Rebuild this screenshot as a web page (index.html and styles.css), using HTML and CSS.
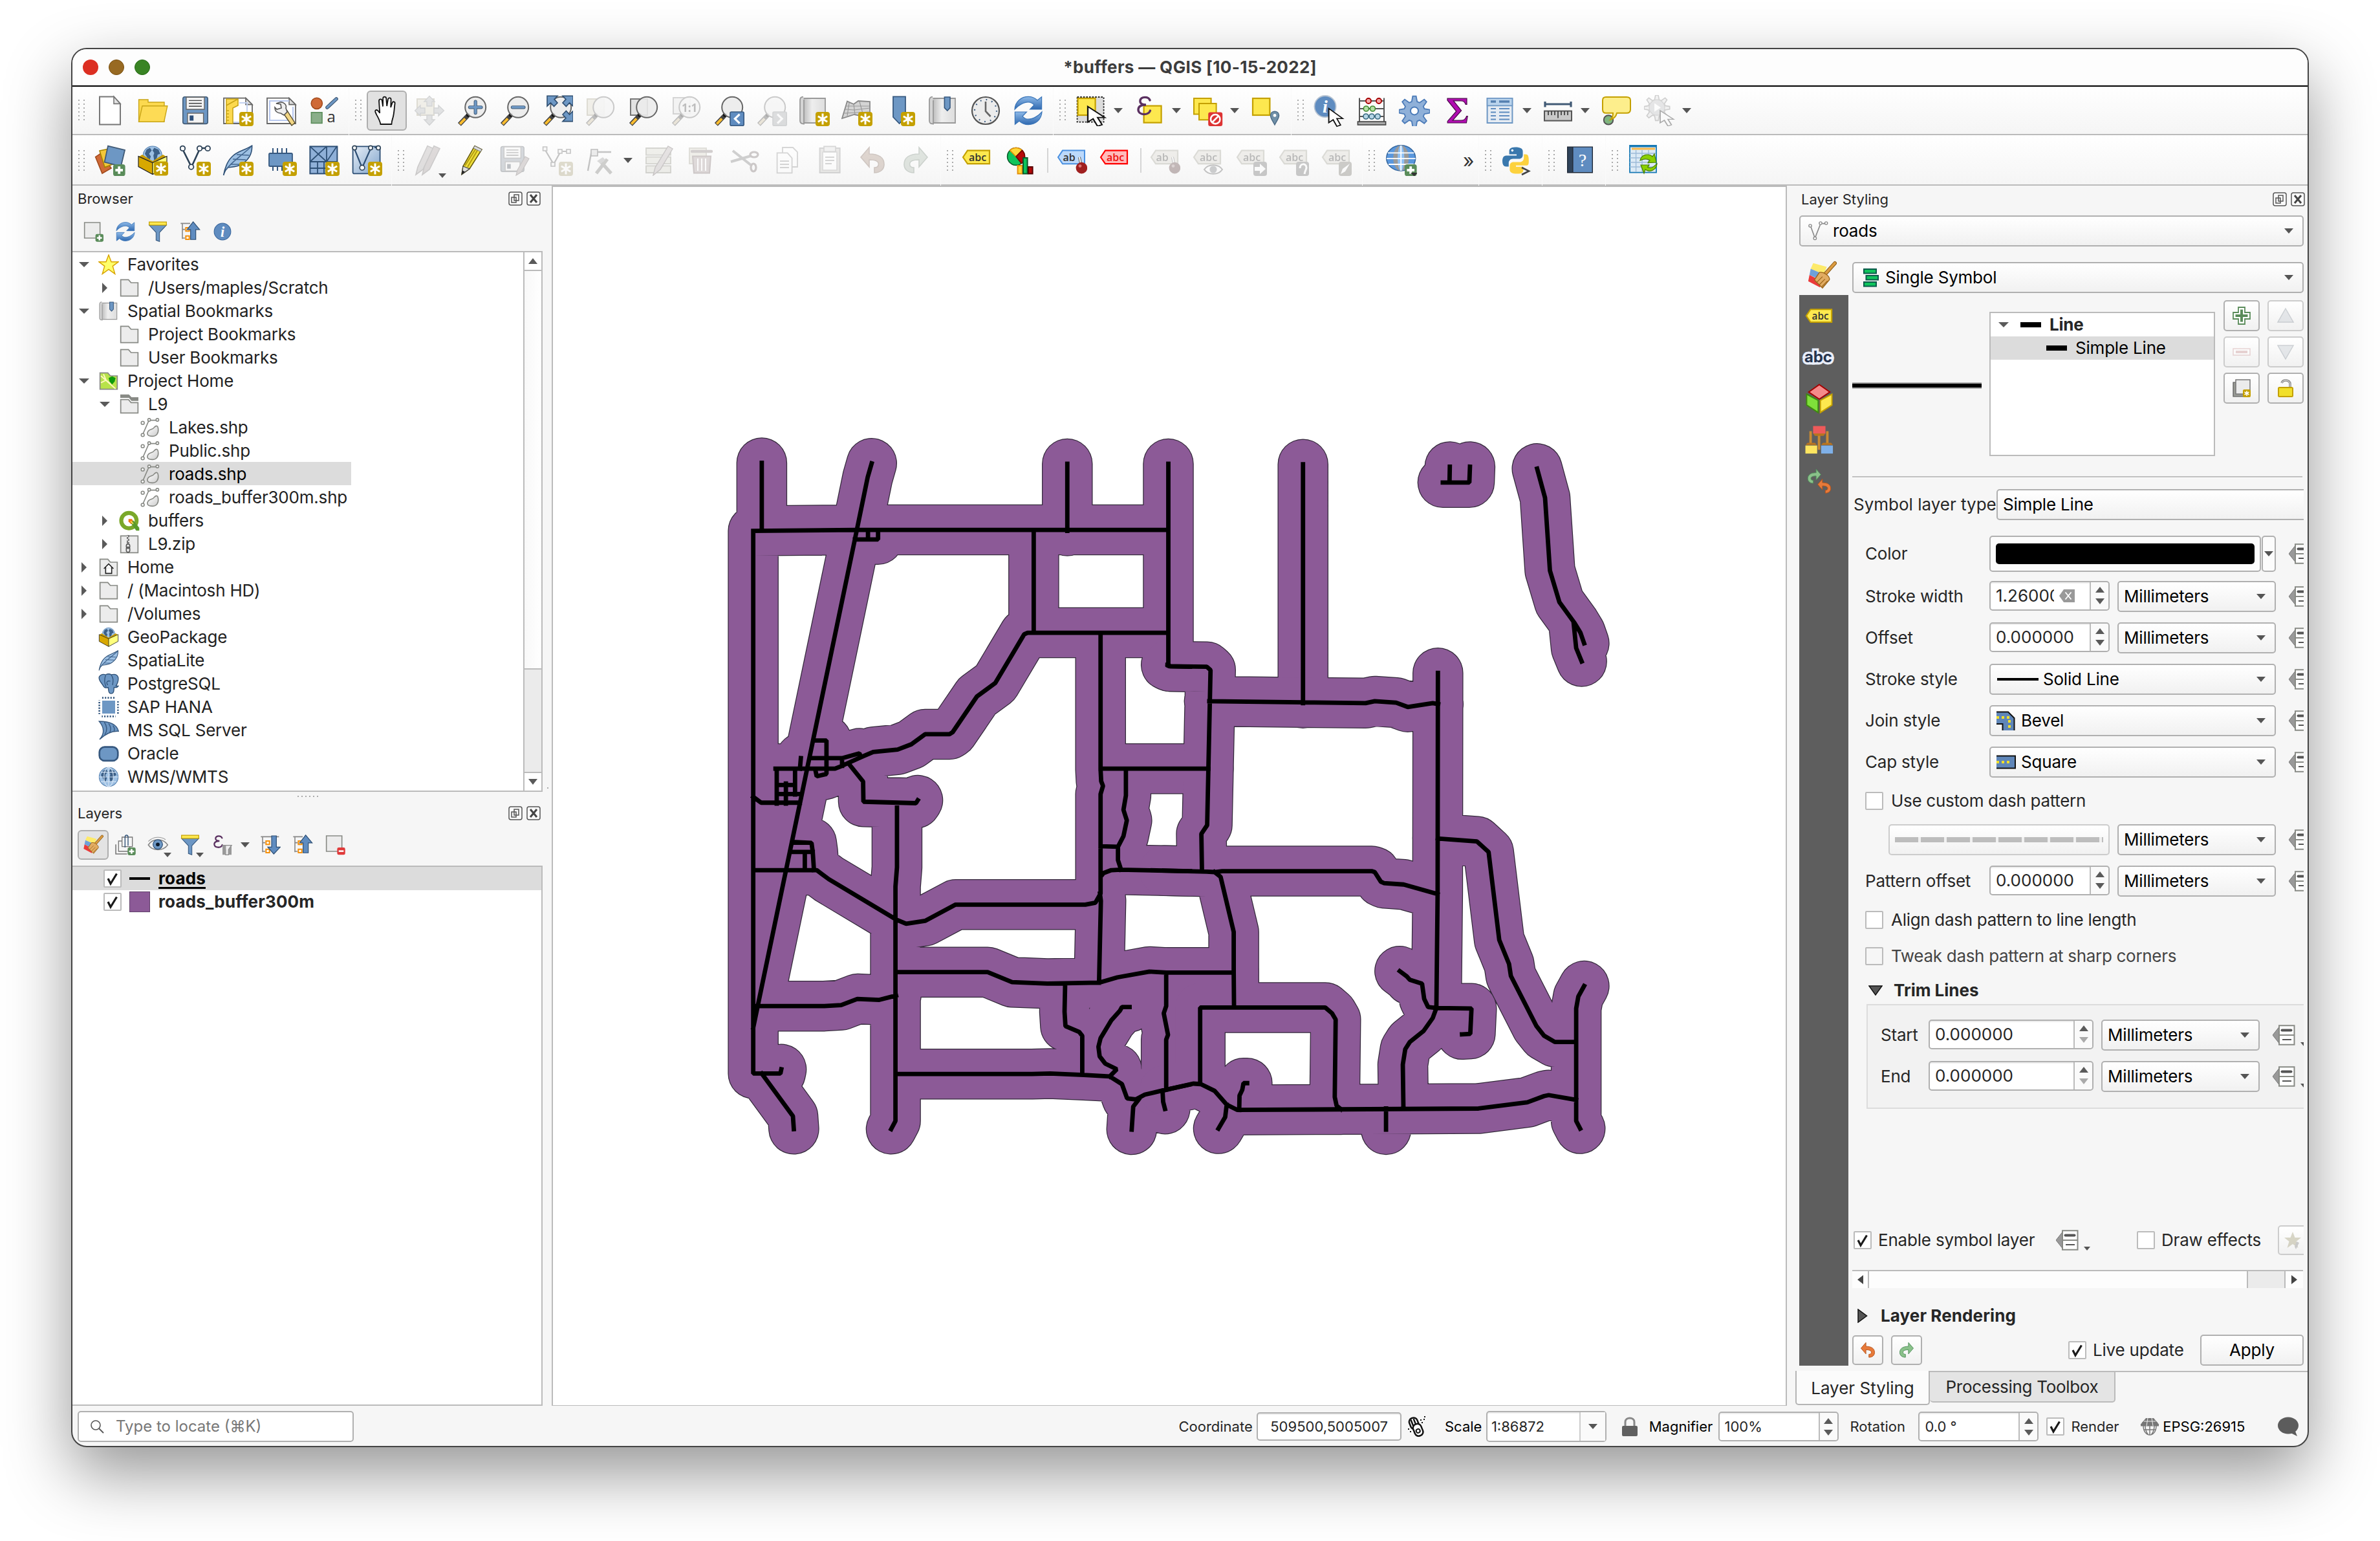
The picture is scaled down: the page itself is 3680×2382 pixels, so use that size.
FILE: index.html
```html
<!DOCTYPE html>
<html lang="en">
<head>
<meta charset="utf-8">
<title>*buffers — QGIS [10-15-2022]</title>
<link rel="stylesheet" href="styles.css">
</head>
<body>
<svg class="sprite" width="0" height="0" aria-hidden="true">
  <defs>
    <linearGradient id="g-blue" x1="0" y1="0" x2="1" y2="1"><stop offset="0" stop-color="#e6eef7"/><stop offset="1" stop-color="#7fa3cb"/></linearGradient>
    <linearGradient id="g-arrow" x1="0" y1="0" x2="0" y2="1"><stop offset="0" stop-color="#8db9e8"/><stop offset="1" stop-color="#2f69b0"/></linearGradient>
    <linearGradient id="g-grey" x1="0" y1="0" x2="1" y2="0"><stop offset="0" stop-color="#bbb"/><stop offset=".4" stop-color="#eee"/><stop offset="1" stop-color="#ddd"/></linearGradient>
    <linearGradient id="g-shape" x1="0" y1="0" x2="1" y2="1"><stop offset="0" stop-color="#fff"/><stop offset="1" stop-color="#ccc"/></linearGradient>
    <g id="b-new"><rect x="13" y="13" width="11" height="11" rx="2" fill="#c4a000"/><path d="M18.500 14.300v8.400M14.900 16.400l7.200 4.200M22.100 16.400l-7.200 4.200" stroke="#fff" stroke-width="1.500"/></g>
    <g id="b-plus"><rect x="14.500" y="15" width="9.300" height="9" rx="1.800" fill="#5a8c5a"/><path d="M19.100 16.600v5.800M16.200 19.500h5.800" stroke="#fff" stroke-width="1.900"/></g>
    <g id="lens"><path d="M9.300 15.200L2.200 22.700" stroke="#444" stroke-width="3.400"/><path d="M6.600 18.200L2.600 22.300" stroke="#fcbd2f" stroke-width="2"/><circle cx="9" cy="15.400" r="1.500" fill="#111"/><circle cx="14.600" cy="9.400" r="8" fill="#ebebeb" fill-opacity=".9" stroke="#666" stroke-width="1"/></g>
    <g id="cursor"><path d="M0 0v11.500l2.800-2.400 2.400 5.400 2.400-1.100-2.400-5.300h3.800z" fill="#fff" stroke="#111" stroke-width=".8"/></g>
    <g id="world"><circle cx="12" cy="12" r="11" fill="#9dc0e3" stroke="#5580b0" stroke-width=".8"/><path d="M5 5l4-2 2 3-3 4 2 3-2 6-3-6-2-3zM14 3l5 2 2 5-3 1-1 4-3 3-1-6 1-3-2-3z" fill="#3c6088"/></g>
    <g id="cube"><path d="M1 10l11 5v9L1 18z" fill="#d8a800"/><path d="M23 10l-11 5v9l11-6z" fill="#ffff7d"/><path d="M1 10l11 5 11-5v8l-11 6L1 18zM12 15v9" fill="none" stroke="#222" stroke-width=".6"/></g>
  </defs>

  <symbol id="i-new" viewBox="0 0 24 24"><path d="M4 1.200h11l5 5.500v16H4z" fill="#fff" stroke="#777"/><path d="M15 1.200v5.500h5z" fill="#e4e4e4" stroke="#777" stroke-width=".8"/></symbol>
  <symbol id="i-open" viewBox="0 0 24 24"><path d="M1.300 3.500h7.200v2H21v15H1.300z" fill="#fcd94f" stroke="#c8a416" stroke-width=".7"/><path d="M4 8.400h19.400l-2.600 12.200H1.300z" fill="#fddb55" stroke="#c8a416" stroke-width=".7"/></symbol>
  <symbol id="i-save" viewBox="0 0 24 24"><rect x="2.400" y="1.400" width="19.200" height="20.800" rx="1.500" fill="#6d97c4" stroke="#415a75" stroke-width=".8"/><path d="M5 1.600h14V11H5zM6 14h12.300v7.600H6z" fill="#f3f3f3" stroke="#666" stroke-width=".7"/><path d="M7 4.200h10M7 6.400h10M7 8.600h10" stroke="#444" stroke-width=".7"/><path d="M7.600 15.800h3v4h-3z" fill="#2d4f7a"/></symbol>
  <symbol id="i-layout" viewBox="0 0 24 24"><path d="M1 2.300h17l5 5V22H1z" fill="#fff" stroke="#666" stroke-width=".9"/><path d="M18 2.300v5h5z" fill="#ddd" stroke="#666" stroke-width=".8"/><path d="M13 6h6v15H7" fill="none" stroke="#c3d2f2"/><path d="M3 3h9v5l-4 2v12H3z" fill="#fcd94f" stroke="#c8a416" stroke-width=".8"/><path d="M3 8l9-5M3 12h2M3 14.500h2M3 17h2M3 19.500h2" stroke="#c8a416" stroke-width=".8"/><use href="#b-new"/></symbol>
  <symbol id="i-layouts" viewBox="0 0 24 24"><path d="M1 2.300h17l5 5V22H1z" fill="#fff" stroke="#666" stroke-width=".9"/><path d="M18 2.300v5h5z" fill="#ddd" stroke="#666" stroke-width=".8"/><path d="M3 4.500h15M3 4v15.500h18V9" fill="none" stroke="#b9c9ef" stroke-width="1.100"/><path d="M13.500 14l3-2 6 9.500-2.500 2z" fill="#f2d684" stroke="#554a2a" stroke-width=".7"/><path d="M8 6.500l3.500.5.5 3-3.500 1-1.500-1.500c0 3 2 4.500 4.500 4.500l2.500 1.500 2.500-2.500-1-3c1-2.500-2-5-4.500-4.500z" fill="#eee" stroke="#555" stroke-width=".8"/></symbol>
  <symbol id="i-style" viewBox="0 0 24 24"><circle cx="6.400" cy="6.400" r="4.300" fill="#cf6a37" stroke="#a34b1d" stroke-width=".8"/><path d="M14.500 9.500l7-6.500" stroke="#415a75" stroke-width="2.800" stroke-linecap="round"/><path d="M14.500 9.500l7-6.500" stroke="#6d97c4" stroke-width="1.600" stroke-linecap="round"/><rect x="2.200" y="13.400" width="8.300" height="8.300" fill="#8aae8a" stroke="#5a8c5a" stroke-width=".8"/></symbol>
  <symbol id="i-hand" viewBox="0 0 24 24"><path d="M7.200 22.500c-.4-2.600-1.600-4.600-3-7.200-.6-1.400-1.700-2.700-.9-3.500 1-.9 2.300.3 3.300 2.100L6 4.500c0-1.600 2.100-1.800 2.400-.2l.6 4.500.1-6.300c0-1.600 2.300-1.600 2.500 0l.5 6 .9-5.400c.3-1.400 2.300-1.200 2.300.3l-.2 6.100 1.200-3.600c.5-1.300 2.200-.8 2 .6-.6 4.300-.5 7.500-1.600 11.200-.6 1.800-.9 3-1 4.800z" fill="#fff" stroke="#111" stroke-width=".9"/></symbol>
  <symbol id="i-pan" viewBox="0 0 24 24"><rect x="2.500" y="3" width="13" height="12.500" fill="#e8d889" stroke="#b89f3e"/><path d="M12 .8l4 4.200h-2v3.500h-4V5H8zM12 23.200L8 19h2v-3.500h4V19h2zM.8 12L5 8v2h3.500v4H5v2zM23.200 12L19 16v-2h-3.500v-4H19V8z" fill="#a9b4c0" stroke="#7d8a98" stroke-width=".7"/></symbol>
  <symbol id="i-zin" viewBox="0 0 24 24"><use href="#lens"/><path d="M14.600 5v8.800M10.200 9.400H19" stroke="#415a75" stroke-width="2.600" stroke-linecap="round"/><path d="M14.600 5v8.800M10.200 9.400H19" stroke="#6d97c4" stroke-width="1.700" stroke-linecap="round"/></symbol>
  <symbol id="i-zout" viewBox="0 0 24 24"><use href="#lens"/><path d="M10.200 9.400H19" stroke="#415a75" stroke-width="2.600" stroke-linecap="round"/><path d="M10.200 9.400H19" stroke="#6d97c4" stroke-width="1.700" stroke-linecap="round"/></symbol>
  <symbol id="i-zfull" viewBox="0 0 24 24"><use href="#lens"/><path d="M4 .6h8L9.500 3.200 12 6 9.300 8.800 6.700 6 4 8.600zM24 .6h-8l2.500 2.600L16 6l2.700 2.800L21.300 6 24 8.600zM24 20.300h-8l2.500-2.600L16 15l2.700-2.800 2.600 2.800 2.700-2.700z" fill="#6d97c4" stroke="#2f4e70" stroke-width=".8"/></symbol>
  <symbol id="i-zsel" viewBox="0 0 24 24"><path d="M2 3h13v12.500H2z" fill="#e8d889" stroke="#b89f3e"/><use href="#lens"/></symbol>
  <symbol id="i-zlay" viewBox="0 0 24 24"><path d="M2 3h13v12.500H2z" fill="#e3e3e3" stroke="#777"/><use href="#lens"/></symbol>
  <symbol id="i-z11" viewBox="0 0 24 24"><path d="M2 2h13v12.500H2z" fill="#e3e3e3" stroke="#888"/><use href="#lens"/></symbol>
  <symbol id="i-zlast" viewBox="0 0 24 24"><use href="#lens"/><rect x="13" y="13" width="10.600" height="10.600" rx="1" fill="#5f8cc0" stroke="#36587f" stroke-width=".8"/><path d="M20.300 14.800l-3.600 3.500 3.600 3.500" fill="none" stroke="#fff" stroke-width="1.600"/></symbol>
  <symbol id="i-znext" viewBox="0 0 24 24"><use href="#lens"/><rect x="13" y="13" width="10.600" height="10.600" rx="1" fill="#9aa6b3" stroke="#7d8a98" stroke-width=".8"/><path d="M16.500 14.800l3.600 3.500-3.600 3.500" fill="none" stroke="#fff" stroke-width="1.600"/></symbol>
  <symbol id="i-newmap" viewBox="0 0 24 24"><path d="M3.500 2.500h17v19h-17z" fill="url(#g-grey)" stroke="#999" stroke-width=".9"/><path d="M3.500 1.300c-2.500 0-2.500 2-2.500 3v15.500c0 2 1 2.500 3 2.500V3.500" fill="#d5d5d5" stroke="#999" stroke-width=".9"/><use href="#b-new"/></symbol>
  <symbol id="i-3d" viewBox="0 0 24 24"><path d="M4.500 4.800L9.500 7 13 4.500l9 .5v12.500l-5-1-7-1.500-9.500 3z" fill="#d4d4d4" stroke="#888" stroke-width=".9"/><path d="M3 11l7 .5 12-1.500M9.500 7l1 8M14 5l3 11M6 6l-1.500 10M3.500 8.500l18 0M2 14l20-1" stroke="#999" stroke-width=".6" fill="none"/><use href="#b-new"/></symbol>
  <symbol id="i-bmnew" viewBox="0 0 24 24"><path d="M7 1.200h9.500V17l-4.700 5L7 17z" fill="#6d97c4" stroke="#36587f" stroke-width=".9"/><use href="#b-new"/></symbol>
  <symbol id="i-bm" viewBox="0 0 24 24"><path d="M4 2.500h17.500v19H4z" fill="url(#g-grey)" stroke="#999" stroke-width=".9"/><path d="M4 1.300c-2 0-2.500 1-2.500 3v15.500c0 2 1 2.300 3 2.500V4" fill="#d5d5d5" stroke="#999" stroke-width=".9"/><path d="M13.200 1.500h4.300v8.300l-2.100 2.200-2.200-2.200z" fill="#6d97c4" stroke="#36587f" stroke-width=".8"/></symbol>
  <symbol id="i-clock" viewBox="0 0 24 24"><circle cx="12" cy="12" r="10.500" fill="#ececec" stroke="#555" stroke-width="1.100"/><circle cx="12" cy="12" r="8.500" fill="none" stroke="#36587f" stroke-width="1.100" stroke-dasharray=".9 3.550"/><path d="M12 5v7.500l3.800 4" stroke="#666" stroke-width="1.300" fill="none"/></symbol>
  <symbol id="i-refresh" viewBox="0 0 24 24"><path d="M1.500 11C1.800 5 6.500 1.200 12 1.200c3 0 5.300 1.200 7 2.800l3.300-2.600V11h-9l3.200-3.400C15 6 13.800 5.400 12 5.400 8.500 5.400 4 8 1.500 11z" fill="url(#g-arrow)" stroke="#3a75b8" stroke-width=".6"/><path d="M22.500 13c-.3 6-5 9.800-10.500 9.800-3 0-5.300-1.200-7-2.800l-3.300 2.600V13h9l-3.200 3.400c1.500 1.600 2.700 2.200 4.500 2.200 3.500 0 8-2.600 10.500-5.600z" fill="url(#g-arrow)" stroke="#3a75b8" stroke-width=".6"/></symbol>
  <symbol id="i-select" viewBox="0 0 24 24"><rect x="1.300" y="1.500" width="20.500" height="19.300" fill="#dcdcdc" stroke="#222" stroke-width=".9" stroke-dasharray="1.300 1"/><rect x="1.800" y="2.500" width="13.500" height="13" fill="#fde84f" stroke="#c4a000" stroke-width="1.100"/><g transform="translate(9.500 8.800) scale(1.450 1.050)"><use href="#cursor"/></g></symbol>
  <symbol id="i-eps" viewBox="0 0 24 24"><rect x="7.800" y="8.300" width="13.500" height="13" fill="#fde84f" stroke="#c4a000" stroke-width="1.100"/><path d="M12.500 4c-1-3-7-3.200-7.500.3-.3 2.400 2 3.200 4.500 3.200-3 0-6 .8-6 3.800.2 4.500 8 4.600 9.200.7" fill="none" stroke="#5a3060" stroke-width="1.700" stroke-linecap="round"/></symbol>
  <symbol id="i-desel" viewBox="0 0 24 24"><path d="M1.500 2.500h13.300v12.300H1.500z" fill="#fde84f" stroke="#c4a000"/><path d="M5.500 6.500h13.300v12.600H5.500z" fill="#fde84f" stroke="#c4a000"/><rect x="12.600" y="13.200" width="11" height="10.800" rx="1.500" fill="#d33"/><circle cx="18.100" cy="18.600" r="3.600" fill="#d33" stroke="#fff" stroke-width="1.300"/><path d="M15.700 21l4.800-4.800" stroke="#fff" stroke-width="1.300"/></symbol>
  <symbol id="i-selloc" viewBox="0 0 24 24"><rect x="2" y="2.500" width="13.200" height="13" fill="#fde84f" stroke="#c4a000" stroke-width="1.100"/><path d="M19 23c-1.700-3.500-3.300-5-3.300-7.400 0-4 6.600-4 6.600 0C22.300 18 20.700 19.500 19 23z" fill="#7090a8" stroke="#4a6a85" stroke-width=".7"/><circle cx="19" cy="15.700" r="1.200" fill="#fff"/></symbol>
  <symbol id="i-disc" viewBox="0 0 24 24"><circle cx="9" cy="8.800" r="8.300" fill="#5f8cc0" stroke="#b8c4d2" stroke-width=".9"/></symbol>
  <symbol id="i-abacus" viewBox="0 0 24 24"><path d="M2.500 2.200V21M21.500 2.200V21M2.500 4.500h19M2.500 10.500h19M2.500 16.500h19" stroke="#555" stroke-width="1" fill="none"/><rect x="1.200" y="20.500" width="21.600" height="2.500" fill="#aaa" stroke="#444" stroke-width=".8"/><g fill="#f4a6a6" stroke="#a40000" stroke-width=".9"><circle cx="9.500" cy="4.500" r="2"/><circle cx="17.500" cy="4.500" r="2"/></g><g fill="#b5e0a5" stroke="#3f8a2f" stroke-width=".8"><circle cx="7.700" cy="10.500" r="2"/><circle cx="12.700" cy="10.500" r="2"/></g><g fill="#b5d5e5" stroke="#36687f" stroke-width=".8"><circle cx="7.500" cy="16.500" r="2"/><circle cx="12" cy="16.500" r="2"/><circle cx="16.600" cy="16.500" r="2"/></g></symbol>
  <symbol id="i-gear" viewBox="0 0 24 24"><g fill="#8fb0d8" stroke="#4a7ab8" stroke-width=".9"><path id="gear-p" d="M10.700 1.500h2.600l.8 4.300 1.900.8 3.600-2.600 1.800 1.900-2.500 3.600.8 1.800 4.200.7v2.500l-4.200.8-.8 1.900 2.500 3.500-1.800 1.900-3.600-2.500-1.900.8-.8 4.200h-2.600l-.8-4.200-1.900-.8-3.500 2.500-1.900-1.900L5 17.200l-.8-1.900-4.100-.8v-2.500l4.100-.7.800-1.800-2.400-3.600L4.500 4 8 6.600l1.900-.8z" transform="translate(0 -.7)"/></g><circle cx="12" cy="12.200" r="3" fill="#fff" stroke="#4a7ab8"/></symbol>
  <symbol id="i-sigma" viewBox="0 0 24 24"><path d="M4.500 2.600h15v4.600h-.9C18 5 17 4.400 15 4.400H9.200L15.300 12l-6.700 7.600H15c2.500 0 3.600-1 4.300-3.300h.8l-.9 5.200H4.600v-1.300L11.400 12.500 4.500 4z" fill="#b10db1" stroke="#4a0a4a" stroke-width=".6"/></symbol>
  <symbol id="i-table" viewBox="0 0 24 24"><rect x="2.300" y="2.500" width="19.400" height="19" fill="#e6ecf3" stroke="#6d97c4" stroke-width="1"/><path d="M2.300 2.500h19.400v5.700H2.300z" fill="#b9d3ec" stroke="#6d97c4" stroke-width=".8"/><path d="M5 5h4M11.500 5h8" stroke="#5580b0" stroke-width="1.700"/><path d="M5 10.500h4M11.500 10.500h8M5 13.200h4M11.500 13.200h8M5 16h4M11.500 16h8M5 18.800h4M11.500 18.800h8" stroke="#5f8cc0" stroke-width="1"/></symbol>
  <symbol id="i-measure" viewBox="0 0 24 24"><path d="M2 7h20M2 5v4.200M22 5v4.200" stroke="#415a75" stroke-width="1.600" fill="none"/><rect x="1.500" y="12.300" width="21" height="7.500" fill="#c9c9c9" stroke="#555" stroke-width="1"/><path d="M4.500 12.500v3M7 12.500v3M9.500 12.500v3M12 12.500v5.200M14.500 12.500v3M17 12.500v3M19.500 12.500v3" stroke="#333" stroke-width=".8"/></symbol>
  <symbol id="i-tip" viewBox="0 0 24 24"><circle cx="6" cy="19.200" r="3.600" fill="#7fb57f" stroke="#555" stroke-width="1"/><path d="M4 1.500h16c2 0 3 .8 3 2.600v7c0 1.800-1 2.800-3 2.800h-7.500c-.6 2.500-2 4.200-4.800 5 1.500-1.600 1.900-3 1.800-5H4c-1.700 0-2.500-1-2.500-2.800v-7c0-1.800.8-2.600 2.500-2.600z" fill="#fdee8c" stroke="#c4a000" stroke-width="1"/></symbol>
  <symbol id="i-action" viewBox="0 0 24 24"><g transform="translate(0 -.6) scale(.83)" fill="#ddd" stroke="#777" stroke-width="1"><use href="#gear-p"/></g><circle cx="10" cy="9.600" r="6" fill="#b5bcc5" stroke="#888" stroke-width=".6"/><path d="M8 6.300l5 3.300-5 3.300z" fill="#fff"/><g transform="translate(12.500 12) scale(1.150 .82)"><use href="#cursor"/></g></symbol>

  <symbol id="i-addlayer" viewBox="0 0 24 24"><path d="M.8 9.300l4.500-3L13 18l-7 4z" fill="#cf6a37" stroke="#a34b1d" stroke-width=".8"/><path d="M4 4.500l8-1.700L14 15l-6 2.300z" fill="#f3c73a" stroke="#a78500" stroke-width=".8"/><path d="M10.500.8l13 3.200L20.500 16.500 7.800 13.300z" fill="#6d97c4" stroke="#415a75" stroke-width=".9"/><use href="#b-plus"/></symbol>
  <symbol id="i-gpkg" viewBox="0 0 24 24"><g transform="translate(4 .3) scale(.66)"><use href="#world"/></g><path d="M1 9.400L4 7.500l8 5 8-5 3 1.900-11 5z" fill="#c79a00"/><use href="#cube" transform="translate(0 -1.200)"/></symbol>
  <symbol id="i-gpkgnew" viewBox="0 0 24 24"><use href="#i-gpkg"/><use href="#b-new" transform="translate(0 -.2)"/></symbol>
  <symbol id="i-shpnew" viewBox="0 0 24 24"><path d="M2.500 4L8.500 16M9.500 16L15 4M17.500 2.500h4" stroke="#2d4257" stroke-width="1.300"/><g fill="#fff" stroke="#2d4257" stroke-width=".9"><circle cx="2.200" cy="2.700" r="1.900"/><circle cx="15.300" cy="2.700" r="1.900"/><circle cx="21.600" cy="2.700" r="1.900"/><circle cx="8.800" cy="17" r="1.900"/></g><use href="#b-new"/></symbol>
  <symbol id="i-featherg" viewBox="0 0 24 24"><path d="M.8 23.500C2 17 3.500 13 7 9.500 11.500 4.500 17 4.500 22.800.6c.3 7-3.500 11.600-8 14.400-3.500 2-7 2-10.600 2.500C2.500 19 1.500 21 .8 23.500z" fill="#9dc0e3" stroke="#2d4f75" stroke-width=".8"/><path d="M3 19C7 13 14 9 22 1.500M8 11l10 .5M11 7.500l9.500.5M6 15h8" fill="none" stroke="#41658f" stroke-width=".8"/></symbol>
  <symbol id="i-feathernew" viewBox="0 0 24 24"><use href="#i-featherg"/><use href="#b-new"/></symbol>
  <symbol id="i-memnew" viewBox="0 0 24 24"><path d="M5.500 2.500v4M9 2.500v4M12.500 2.500v4M16 2.500v4M5.500 16.500V20M9 16.500V20M12.500 16.500V20" stroke="#36587f" stroke-width="1"/><rect x="2.500" y="6.500" width="18" height="10" rx=".8" fill="#6d97c4" stroke="#36587f" stroke-width=".9"/><use href="#b-new"/></symbol>
  <symbol id="i-mesh" viewBox="0 0 24 24"><rect x="1.200" y="1.200" width="21" height="21" fill="#8fb0d8" stroke="#2d4f75" stroke-width="1"/><path d="M1.200 13h21M14 1v12M7 13v9M12 13v9M1.200 18h12M1.200 1.200L14 13M14 1.200L1.200 13M14 13l8-12" stroke="#2d4f75" stroke-width=".9" fill="none"/><use href="#b-new"/></symbol>
  <symbol id="i-virtual" viewBox="0 0 24 24"><rect x="1.300" y="1.200" width="21" height="21" rx="1" fill="url(#g-blue)" stroke="#2d4f75" stroke-width=".9"/><path d="M2.500 3L8 16.500M9 16.500L15 3M18 2h4" stroke="#2d4f75" stroke-width="1.100"/><g fill="#fff" stroke="#2d4257" stroke-width=".8"><circle cx="15" cy="2.300" r="1.600"/><circle cx="21" cy="2.300" r="1.600"/><circle cx="2.600" cy="2.300" r="1.600"/><circle cx="8.500" cy="17.600" r="1.900"/></g><use href="#b-new"/></symbol>
  <symbol id="i-pencils" viewBox="0 0 24 24"><g stroke="#7a6a6a" stroke-width=".8"><path d="M1.500 23l1.500-6L10.500.8l4.500 2L7 19z" fill="#b5a5a5"/><path d="M6.500 23L8 17 15.500.8l4.500 2L12 19z" fill="#b98f8f"/></g></symbol>
  <symbol id="i-pencil" viewBox="0 0 24 24"><path d="M4 22.800l1-6.300L14 .8l5.500 2.700L10 18.500z" fill="#f0e03a" stroke="#6a5d10" stroke-width=".8"/><path d="M8.500 17L16.500 3.500M6.500 16l9-14" stroke="#b39c12" stroke-width="1"/><path d="M4 22.800l1-6.300 5 2z" fill="#ddd" stroke="#444" stroke-width=".6"/><path d="M4 22.800l.5-3 2 1z" fill="#222"/><path d="M13 2.500L14 .8l5.500 2.700-1 1.700z" fill="#ddd" stroke="#777" stroke-width=".5"/></symbol>
  <symbol id="i-saveedit" viewBox="0 0 24 24"><use href="#i-save" transform="translate(-1 0) scale(.93)"/><path d="M13 23.500l1-4L20 9l3 1.600-6 10.400z" fill="#b98f8f" stroke="#7a5a5a" stroke-width=".6"/></symbol>
  <symbol id="i-digit" viewBox="0 0 24 24"><path d="M2.500 4l6 10M9.500 14l5-9M16 5h5" stroke="#555" stroke-width="1.100"/><g fill="#eee" stroke="#555" stroke-width=".8"><path d="M.8 1.500h3v3h-3zM12.500 3.500h3v3h-3zM19 3.500h3v3h-3zM7 13.500h3v3H7z"/></g><use href="#b-new"/></symbol>
  <symbol id="i-vertex" viewBox="0 0 24 24"><path d="M5 4l-3 16M5.500 5.500H20" stroke="#555" stroke-width="1.200"/><path d="M4.500 3.500h5v5h-5z" fill="#ccc" stroke="#444" stroke-width=".8"/><path d="M8.500 22L17 11M20 22L11 12" stroke="#776" stroke-width="2.600"/><path d="M9 12.500l4.500-3 2 2-3.500 3z" fill="#999"/></symbol>
  <symbol id="i-edtable" viewBox="0 0 24 24"><g fill="#d8d6a8" stroke="#8a8a55" stroke-width=".9"><path d="M2 2.500h19v5.300H2zM2 9.300h19v5.300H2zM2 16.200h19v5.300H2z"/></g><path d="M7.500 23.500l1.500-6L19 1l3.500 2L13 19z" fill="#c9a9a9" stroke="#7a5a5a" stroke-width=".7"/></symbol>
  <symbol id="i-trash" viewBox="0 0 24 24"><path d="M2.500 2.500h13v12h-13z" fill="#e0d69a" stroke="#b0a76a"/><path d="M4.500 5h15" stroke="#a06a6a" stroke-width="2.200" stroke-linecap="round"/><path d="M5 8.800h14l-1 13H6z" fill="#c98f8f" stroke="#a05a5a"/><path d="M9 10.500v9.500M12 10.500v9.500M15 10.500v9.500" stroke="#fff"/></symbol>
  <symbol id="i-cut" viewBox="0 0 24 24"><path d="M3 4.500l14 11M1.500 13L17 8.500" stroke="#777" stroke-width="2"/><g fill="none" stroke="#8a5f5f" stroke-width="1.600"><ellipse cx="19.500" cy="7.500" rx="3" ry="2"/><ellipse cx="19" cy="17.500" rx="2" ry="3"/></g></symbol>
  <symbol id="i-copy" viewBox="0 0 24 24"><g fill="#fff" stroke="#888" stroke-width=".9"><path d="M8.500 2h8l3.500 3.500V17H8.500z"/><path d="M4.300 6.200h8l3.500 4v11.500H4.300z"/></g><path d="M6.500 12.500h7M6.500 15h7M6.500 17.500h7" stroke="#888" stroke-width=".9"/></symbol>
  <symbol id="i-paste" viewBox="0 0 24 24"><path d="M4.300 2.500h15.500v19H4.300z" fill="#c9c2b0" stroke="#888"/><path d="M6.500 5.500h11v14h-11z" fill="#fff" stroke="#999" stroke-width=".8"/><path d="M7.500 1.200h9v4h-9z" fill="#ddd" stroke="#888" stroke-width=".8"/><path d="M8.500 9.500h7M8.500 12h7M8.500 14.500h5" stroke="#888" stroke-width=".9"/></symbol>
  <symbol id="i-undo" viewBox="0 0 24 24"><path d="M3 9.500L9.500 2v5C17 7 21 10 21 15c0 4-3 6.500-7.500 6.500v-4c2 0 3.200-.8 3.200-2.700 0-2.200-2.700-3.300-7.200-3.300V17z" fill="#e77a3a" stroke="#b5521a" stroke-width=".8"/></symbol>
  <symbol id="i-redo" viewBox="0 0 24 24"><path d="M21 9.500L14.500 2v5C7 7 3 10 3 15c0 4 3 6.500 7.500 6.500v-4c-2 0-3.200-.8-3.200-2.700 0-2.200 2.700-3.300 7.200-3.300V17z" fill="#8ac18a" stroke="#4f8f5a" stroke-width=".8"/></symbol>
  <symbol id="i-tag" viewBox="0 0 24 24"><path d="M1.500 9.500L5 4.300h17v10.300H5z" fill="#fde94f" stroke="#c4a000" stroke-width="1.100"/></symbol>
  <symbol id="i-tagred" viewBox="0 0 24 24"><path d="M1.500 9.500L5 4.300h17v10.300H5z" fill="#fbb" stroke="#f00" stroke-width="1.100"/></symbol>
  <symbol id="i-tagblue" viewBox="0 0 24 24"><path d="M1.500 9.500L5 4.300h17v10.300H5z" fill="#bcd9fb" stroke="#4a90e0" stroke-width="1"/></symbol>
  <symbol id="i-tagg" viewBox="0 0 24 24"><path d="M1.500 9.500L5 4.300h17v10.300H5z" fill="#d8d3a8" stroke="#a39c68" stroke-width="1.100"/></symbol>
  <symbol id="i-pin" viewBox="0 0 24 24"><path d="M18 9.500l1.700 8" stroke="#555" stroke-width="2"/><path d="M18 9.500l1.700 8" stroke="#fff" stroke-width="1"/><circle cx="19.700" cy="17.800" r="4.400" fill="#a02020"/><circle cx="18.500" cy="16.300" r="1.200" fill="#d77"/></symbol>
  <symbol id="i-globe" viewBox="0 0 24 24"><ellipse cx="11.600" cy="10.200" rx="11.200" ry="9.800" fill="#5a97dd" stroke="#36689f" stroke-width=".8"/><ellipse cx="11.600" cy="10.200" rx="6" ry="9.800" fill="#999"/><ellipse cx="11.600" cy="10.200" rx="2.600" ry="9.800" fill="#8ec0f5"/><path d="M1.500 6.200h20.200M.5 10.600h22.300M2 15h19.500M11.600.5v19.400" stroke="#fff" stroke-width=".9"/><use href="#b-plus"/><path d="M19 21.500h5.500l-2.700 2.800z" fill="#333"/></symbol>
  <symbol id="i-python" viewBox="0 0 24 24"><path d="M11 1.800c-4 0-4.700 1.500-4.700 3.200v2.200H12v1H4C2 8.200 1 10 1 12.200c0 3 1 4.600 3 4.600h1.900v-2.600c0-2 1.300-3.400 3.300-3.400h4.700c1.700 0 2.900-1.200 2.900-2.900V5c0-2-1.800-3.200-5.800-3.200z" fill="#3a78ad"/><circle cx="8.700" cy="4.300" r=".9" fill="#fff"/><path d="M12.500 22.300c4 0 4.700-1.500 4.700-3.200v-2.200h-5.700v-1h8c2 0 1.900-1.800 1.900-4 0-3-.5-4.600-2.500-4.600h-1.300v2.600c0 2-1.300 3.400-3.300 3.400H9.600c-1.700 0-2.900 1.200-2.900 2.900v2.900c0 2 1.800 3.200 5.800 3.200z" fill="#fdd23e"/><path d="M16 17.500l5.500 2.700L16 23" fill="none" stroke="#444" stroke-width="1.300"/></symbol>
  <symbol id="i-book" viewBox="0 0 24 24"><path d="M2 1.300h20v20.500H2z" fill="#222b38"/><path d="M6.800 1.900h14.500V21H6.800z" fill="#5f8cc0"/><path d="M2.700 1.900h3.400V21H2.700z" fill="#30435a"/></symbol>
  <symbol id="i-calc" viewBox="0 0 24 24"><path d="M1.500.5h20.500v20.800H1.500z" fill="#dceaf5" stroke="#1779b5" stroke-width=".9"/><path d="M1.500.5h20.500v1.200H1.500z" fill="#1779b5"/><path d="M3 2.300h18v1.500H3z" fill="#f8b84a"/><path d="M1.500 6.500h20M1.500 10h20M1.500 13.500h20M1.500 17h20M6.300 4v17M11 4v17M16 4v17" stroke="#9dbbd8" stroke-width=".7"/><path d="M9.500 12c1-5 7-5.500 9.500-3l1.500-2 1.500 6.500-6.500.3 1.500-2c-2.500-1.500-5-1-7.500.2zM22.500 14.500c-.5 5.500-6 6.800-9 4.500L12.500 22 10 15.500h6.500l-1.200 1.700c2.500 1.300 4.500 0 7.200-2.700z" fill="#8ad000" stroke="#4a8000" stroke-width=".6"/></symbol>

  <symbol id="i-addsel" viewBox="0 0 24 24"><path d="M2 1.500h18v18H2z" fill="#ececec" stroke="#888a85" stroke-width="1.200"/><use href="#b-plus" transform="translate(.2 -.2)"/></symbol>
  <symbol id="i-rmsel" viewBox="0 0 24 24"><path d="M2 1.500h18v18H2z" fill="#ececec" stroke="#888a85" stroke-width="1.200"/><rect x="14.500" y="15" width="9.300" height="8.500" rx="1.800" fill="#e03a3a"/><path d="M16.300 19.200h5.700" stroke="#fff" stroke-width="1.900"/></symbol>
  <symbol id="i-filter" viewBox="0 0 24 24"><path d="M2 4.500l8 8.500v9l4 1.500V13l8-8.500z" fill="#6d97c4" stroke="#36587f" stroke-width=".8"/><path d="M2 .9h20v3.600H2z" fill="#fde84f" stroke="#c4a000" stroke-width=".9"/></symbol>
  <symbol id="i-collapse" viewBox="0 0 24 24"><path d="M1 2.500h11M3 2.500V20.500M3 9.500h3M3 19.500h3" stroke="#888" stroke-width="1.200" fill="none"/><path d="M7 7.500h4v4H7zM7 17h4v4H7z" fill="#fff" stroke="#f5900a" stroke-width="1.500"/><path d="M15.500.6l7.500 9h-4.500v11.600h-6V9.600H8.500z" fill="#5f8cc0" stroke="#2d4f75" stroke-width=".9"/></symbol>
  <symbol id="i-expand" viewBox="0 0 24 24"><path d="M1 2.500h21M3 2.500V20.500M3 9.500h3M3 19.500h3" stroke="#888" stroke-width="1.200" fill="none"/><path d="M7 7.500h4v4H7zM7 17h4v4H7z" fill="#fff" stroke="#f5900a" stroke-width="1.500"/><path d="M16 22.500l7.500-8H19V1.500h-5.500v13H9z" fill="#5f8cc0" stroke="#2d4f75" stroke-width=".9"/></symbol>
  <symbol id="i-brush" viewBox="0 0 24 24"><path d="M5 2l11 3-2.500 6L3 6.500z" fill="#fdea6a"/><path d="M3 6.500L13.500 11 11 15.500 2 11.500z" fill="#6fa0d8"/><path d="M2 11.500l10 5-1.500 5L1 16.500z" fill="#ea3a3a"/><path d="M22.500 2L14 11.500" stroke="#8a5a14" stroke-width="3" stroke-linecap="round"/><path d="M22.500 2L14 11.500" stroke="#dc9c42" stroke-width="2" stroke-linecap="round"/><path d="M10 9.500c2-.5 3.500 0 5.500 1.500s3 3 2.500 4.500L12.500 22 6 15.500z" fill="#e2ac62" stroke="#9a6418" stroke-width=".7"/><path d="M8 17.300l4.500-4.500M10 19.300l4.500-4.500M12 21l4.500-4.800" stroke="#9a6418" stroke-width=".6"/></symbol>
  <symbol id="i-group" viewBox="0 0 24 24"><path d="M.8 11.500v11h13" fill="none" stroke="#777" stroke-width="1.200"/><path d="M4 7.500h13v12H4z" fill="#f5f5f5" stroke="#777"/><path d="M8 3h12v11H8z" fill="#f5f5f5" stroke="#777"/><path d="M11.500 15V3c0-3 3.500-3 3.500 0v10" fill="none" stroke="#2d4f75" stroke-width="1"/><use href="#b-plus"/></symbol>
  <symbol id="i-eye" viewBox="0 0 24 24"><path d="M1 12C6 4 18 4 23.500 12 18 19.500 6 19.500 1 12z" fill="#f4f4f4" stroke="#888" stroke-width="1.200"/><path d="M1 8C7 2 16 2 21 6" fill="none" stroke="#999" stroke-width=".8"/><circle cx="12" cy="11.500" r="5.500" fill="#6d97c4" stroke="#2d4f75" stroke-width=".9"/><circle cx="12" cy="11.500" r="2.200" fill="#0d1a2a"/></symbol>
  <symbol id="i-epsf" viewBox="0 0 24 24"><path d="M11.500 4c-1-3-7-3.200-7.500.3-.3 2.400 2 3.200 4.500 3.200-3 0-6 .8-6 3.800.2 4.500 8 4.600 9.200.7" fill="none" stroke="#5a3060" stroke-width="1.700" stroke-linecap="round"/><path d="M12 12.500h10.500l-3.500 5v6h-3.500v-6z" fill="#eee" stroke="#888"/><path d="M12 12.500h4v11H12zM19 17.500l3.500-5v11H19z" fill="#999"/></symbol>

  <symbol id="i-star" viewBox="0 0 24 24"><path d="M12 .8l3 8h8.300l-6.600 5 2.600 9L12 17.500l-7.300 5.300 2.600-9-6.600-5H9z" fill="#ffff6b" stroke="#d9a400" stroke-width="1.100"/></symbol>
  <symbol id="i-folder" viewBox="0 0 24 24"><path d="M2 2.500h9l3 3.500h8v15.500H2z" fill="#ececec" stroke="#888a85" stroke-width="1.300"/></symbol>
  <symbol id="i-folder-open" viewBox="0 0 24 24"><path d="M1.500.5h10l3 3.300h8V8h-8l-3-3.500h-10z" fill="#888a85"/><path d="M2 6.500h9l3 3.500h8v12H2z" fill="#ececec" stroke="#888a85" stroke-width="1.300"/></symbol>
  <symbol id="i-home" viewBox="0 0 24 24"><path d="M2 2.500h9l3 3.500h8v15.500H2z" fill="#ececec" stroke="#888a85" stroke-width="1.300"/><path d="M6.500 13.500L12 8l5.500 5.500M8.500 12v7h7v-7" fill="#fff" stroke="#222" stroke-width="1.200"/></symbol>
  <symbol id="i-prjhome" viewBox="0 0 24 24"><path d="M2 2.500h9l3 3.500h8v15.500H2z" fill="#b8e34a" stroke="#888a85" stroke-width="1.300"/><path d="M3 6l17 15M3 14l6-3 5 4M9 11L6 4" stroke="#fff8c0" stroke-width="1.400" fill="none"/><path d="M12 8.500l4-2 4 2 -1 4-3 3.500-3-3.500z" fill="#0c9a0c"/></symbol>
  <symbol id="i-vec" viewBox="0 0 24 24"><path d="M3.500 20L10.500 4M12 3.500h8" stroke="#888a85" stroke-width="1.200"/><g fill="#fff" stroke="#888a85" stroke-width="1.200"><circle cx="3.500" cy="6.500" r="1.800"/><circle cx="3.500" cy="20.500" r="1.800"/><circle cx="11" cy="3" r="1.600"/><circle cx="20.500" cy="3" r="1.600"/></g><path d="M9 18c1-5 6-3 8-6.500 2-2 4-2.500 4.500 2 .5 5-2 8.500-7 8.500-3.500 0-6-1-5.500-4z" fill="url(#g-shape)" stroke="#888a85" stroke-width="1.200"/></symbol>
  <symbol id="i-qgis" viewBox="0 0 24 24"><circle cx="11.500" cy="11.800" r="8.900" fill="none" stroke="#7aa82a" stroke-width="4.600"/><path d="M11 10h4l1.500 2.500-2.500 3.500L11 13z" fill="#ee7913"/><path d="M14 15l2.500-3.500 7 8.500v3.500H20z" fill="#5a9a2a"/><path d="M13.500 12.500l3 3" stroke="#fcd94f" stroke-width="1.500"/></symbol>
  <symbol id="i-zip" viewBox="0 0 24 24"><path d="M2 2.500h20v19.500H2z" fill="#ececec" stroke="#888a85" stroke-width="1.300"/><path d="M9 1.500h3v10H9z" fill="#777"/><path d="M9 3h1.500M10.500 5H12M9 7h1.500M10.500 9H12" stroke="#fff" stroke-width="1.200"/><rect x="8.500" y="12" width="4" height="5" rx="2" fill="none" stroke="#555" stroke-width="1.200"/><rect x="8.500" y="15.500" width="4" height="6" rx="2" fill="none" stroke="#555" stroke-width="1.200"/></symbol>
  <symbol id="i-pg" viewBox="0 0 24 24"><path d="M1 4c1.500-3 5-3.500 7.500-2.500 2-1 5-1 6.500 0 4-1 7 0 8 3 .8 4-1 7.500-2.500 10h2.800c-1 1.500-3.300 2-5 1.500-.3 3.500 0 7.300-3.300 7.300-3.500 0-3-4-3.500-7-4 1-5-.5-6-2.300C4 11 0 8 1 4z" fill="#6d97c4" stroke="#2d4f75" stroke-width="1"/><path d="M8.500 2C7 6 7 11 9 15.500M15 2c3 3 2.500 7 1.500 11.500M11 13.500C8.500 10 10.500 8 14 9" fill="none" stroke="#2d4f75" stroke-width=".9"/></symbol>
  <symbol id="i-hana" viewBox="0 0 24 24"><rect x="4.500" y="4.500" width="15" height="15" fill="#6d97c4"/><rect x="1.200" y="1.200" width="21.600" height="21.600" fill="none" stroke="#36587f" stroke-width="2" stroke-dasharray="1.600 1.600"/><path d="M0 0h4v4H0zM20 0h4v4h-4zM0 20h4v4H0zM20 20h4v4h-4z" fill="#fff"/></symbol>
  <symbol id="i-mssql" viewBox="0 0 24 24"><path d="M1 1.500c9 0 20 2 22.500 11.500-7-.5-14.500 2.500-22 9.500C8 15 6.500 8 1 1.500z" fill="#6d97c4" stroke="#36587f"/><path d="M7 2.500c3.500 5 3.500 10 .5 14.500M12 4c3 4 3 7.500 1 11M17 6.500c2 2.500 2 5 1 7" fill="none" stroke="#36587f"/></symbol>
  <symbol id="i-oracle" viewBox="0 0 24 24"><rect x="1.300" y="4.200" width="21.400" height="16" rx="6" fill="#6d97c4" stroke="#36587f" stroke-width="2"/></symbol>
  <symbol id="i-wms" viewBox="0 0 24 24"><use href="#world"/><path d="M1 12h22M12 1v22M3 6.500h18M3 17.500h18" stroke="#cfe0f2" stroke-width=".9"/><ellipse cx="12" cy="12" rx="5.500" ry="11" fill="none" stroke="#cfe0f2" stroke-width=".9"/></symbol>

  <symbol id="i-line" viewBox="0 0 24 24"><path d="M3.500 6.500L8 19M9 19L14.500 5M17 3.500h4" stroke="#888" stroke-width="1.200"/><g fill="#fff" stroke="#888" stroke-width="1"><circle cx="3" cy="6" r="1.600"/><circle cx="15" cy="3" r="1.600"/><circle cx="21.500" cy="3" r="1.600"/><circle cx="8.500" cy="20.500" r="1.700"/></g></symbol>
  <symbol id="i-single" viewBox="0 0 24 30"><g fill="#0fc45c" stroke="#0a5a4a" stroke-width="2"><path d="M1 2h19v6.500H1zM4.500 12H23v6.500H4.500zM1 22h19v6.500H1z"/></g></symbol>
  <symbol id="i-override" viewBox="0 0 36 32"><path d="M0 16L9.500 4v24z" fill="#999" stroke="#777"/><path d="M10 1.200h23.500v29.600H10zM10 16h23.500" fill="#fff" stroke="#888a85" stroke-width="2"/><path d="M14.500 8.500h14" stroke="#555" stroke-width="4" stroke-linecap="round"/><path d="M15 23h14" stroke="#555" stroke-width="2"/></symbol>
  <symbol id="i-float" viewBox="0 0 22 22"><rect x="1" y="1" width="20" height="20" rx="3" fill="#fafafa" stroke="#555" stroke-width="1.500"/><path d="M9 5h7v9H9zM5 9h7v8H5z" fill="#fafafa" stroke="#555" stroke-width="1.500"/></symbol>
  <symbol id="i-close" viewBox="0 0 22 22"><rect x="1" y="1" width="20" height="20" rx="3" fill="#fafafa" stroke="#555" stroke-width="1.500"/><path d="M6 5l10 12M16 5L6 17" stroke="#444" stroke-width="3"/></symbol>
  <symbol id="i-check" viewBox="0 0 28 28"><path d="M6 14l4 8L19.500 6.500" fill="none" stroke="#1a1a1a" stroke-width="3.200"/></symbol>
</svg>

<div class="window">
  <header class="titlebar">
    <div class="lights"><i class="red"></i><i class="amber"></i><i class="green"></i></div>
    <h1>*buffers — QGIS [10-15-2022]</h1>
  </header>

  <div class="toolrow">
    <div class="toolbar">
      <span class="grip"></span>
      <span class="tool"><svg><use href="#i-new"/></svg></span><span class="tool"><svg><use href="#i-open"/></svg></span><span class="tool"><svg><use href="#i-save"/></svg></span><span class="tool"><svg><use href="#i-layout"/></svg></span><span class="tool"><svg><use href="#i-layouts"/></svg></span><span class="tool"><svg viewBox="0 0 24 24"><use href="#i-style"/><text class="ico-a" x="14.300" y="21.200">a</text></svg></span>
    </div>
    <div class="toolbar">
      <span class="grip"></span>
      <span class="tool active"><svg><use href="#i-hand"/></svg></span><span class="tool off"><svg><use href="#i-pan"/></svg></span><span class="tool"><svg><use href="#i-zin"/></svg></span><span class="tool"><svg><use href="#i-zout"/></svg></span><span class="tool"><svg><use href="#i-zfull"/></svg></span><span class="tool off"><svg><use href="#i-zsel"/></svg></span><span class="tool"><svg><use href="#i-zlay"/></svg></span><span class="tool off"><svg viewBox="0 0 24 24"><use href="#i-z11"/><text class="ico-11" x="14.600" y="12.800">1:1</text></svg></span><span class="tool"><svg><use href="#i-zlast"/></svg></span><span class="tool off"><svg><use href="#i-znext"/></svg></span><span class="tool"><svg><use href="#i-newmap"/></svg></span><span class="tool"><svg><use href="#i-3d"/></svg></span><span class="tool"><svg><use href="#i-bmnew"/></svg></span><span class="tool"><svg><use href="#i-bm"/></svg></span><span class="tool"><svg><use href="#i-clock"/></svg></span><span class="tool"><svg><use href="#i-refresh"/></svg></span>
    </div>
    <div class="toolbar">
      <span class="grip"></span>
      <span class="tool"><svg><use href="#i-select"/></svg></span><span class="drop"></span><span class="tool"><svg><use href="#i-eps"/></svg></span><span class="drop"></span><span class="tool"><svg><use href="#i-desel"/></svg></span><span class="drop"></span><span class="tool"><svg><use href="#i-selloc"/></svg></span>
    </div>
    <div class="toolbar last">
      <span class="grip"></span>
      <span class="tool"><svg viewBox="0 0 24 24"><use href="#i-disc"/><text class="ico-i" x="9" y="13.500">i</text><g transform="translate(11.800 10.400) scale(1.200 .95)"><use href="#cursor"/></g></svg></span><span class="tool"><svg><use href="#i-abacus"/></svg></span><span class="tool"><svg><use href="#i-gear"/></svg></span><span class="tool"><svg><use href="#i-sigma"/></svg></span><span class="tool"><svg><use href="#i-table"/></svg></span><span class="drop"></span><span class="tool"><svg><use href="#i-measure"/></svg></span><span class="drop"></span><span class="tool"><svg><use href="#i-tip"/></svg></span><span class="tool off"><svg><use href="#i-action"/></svg></span><span class="drop"></span>
    </div>
  </div>

  <div class="toolrow second">
    <div class="toolbar">
      <span class="grip"></span>
      <span class="tool"><svg><use href="#i-addlayer"/></svg></span><span class="tool"><svg><use href="#i-gpkgnew"/></svg></span><span class="tool"><svg><use href="#i-shpnew"/></svg></span><span class="tool"><svg><use href="#i-feathernew"/></svg></span><span class="tool"><svg><use href="#i-memnew"/></svg></span><span class="tool"><svg><use href="#i-mesh"/></svg></span><span class="tool"><svg><use href="#i-virtual"/></svg></span>
    </div>
    <div class="toolbar">
      <span class="grip"></span>
      <span class="tool off corner"><svg><use href="#i-pencils"/></svg></span><span class="tool"><svg><use href="#i-pencil"/></svg></span><span class="tool off"><svg><use href="#i-saveedit"/></svg></span><span class="tool off"><svg><use href="#i-digit"/></svg></span><span class="tool off"><svg><use href="#i-vertex"/></svg></span><span class="drop"></span><span class="tool off"><svg><use href="#i-edtable"/></svg></span><span class="tool off"><svg><use href="#i-trash"/></svg></span><span class="tool off"><svg><use href="#i-cut"/></svg></span><span class="tool off"><svg><use href="#i-copy"/></svg></span><span class="tool off"><svg><use href="#i-paste"/></svg></span><span class="tool off"><svg><use href="#i-undo"/></svg></span><span class="tool off"><svg><use href="#i-redo"/></svg></span>
    </div>
    <div class="toolbar labels">
      <span class="grip"></span>
      <span class="tool"><svg viewBox="0 0 24 24"><use href="#i-tag"/><text class="ico-abc" x="12.800" y="12.300">abc</text></svg></span><span class="tool diagram"><svg viewBox="0 0 24 24"><circle cx="9.500" cy="9" r="6.700" fill="#0fc45c" stroke="#0a5a2a" stroke-width=".8"/><path d="M9.500 9L4.800 4.200a6.700 6.700 0 0 1 9.400 0z" fill="#fdd83a" stroke="#e5900a" stroke-width=".8"/><path d="M9.500 9l4.700-4.800a6.700 6.700 0 0 1-.5 10.100z" fill="#b50a0a" stroke="#700" stroke-width=".8"/><path d="M10.800 16h3.500v6.200h-3.500z" fill="#fdd83a" stroke="#e5900a"/><path d="M15 10h3.300v12.200H15z" fill="#0fc45c" stroke="#0a5a2a"/><path d="M19 17h3.300v5.200H19z" fill="#b50a0a" stroke="#500"/></svg></span><span class="sep"></span><span class="tool"><svg viewBox="0 0 24 24"><use href="#i-tagblue"/><text class="ico-abc" x="10" y="12.300">ab</text><use href="#i-pin"/></svg></span><span class="tool"><svg viewBox="0 0 24 24"><use href="#i-tagred"/><text class="ico-abc hot" x="12.800" y="12.300">abc</text></svg></span><span class="sep"></span><span class="tool off"><svg viewBox="0 0 24 24"><use href="#i-tagg"/><text class="ico-abc" x="10" y="12.300">ab</text><use href="#i-pin"/></svg></span><span class="tool off"><svg viewBox="0 0 24 24"><use href="#i-tagg"/><text class="ico-abc" x="12.800" y="12.300">abc</text><path d="M9.500 19c3-4.500 11-4.500 14 0-3 4.500-11 4.500-14 0z" fill="#fff" stroke="#555"/><circle cx="16.500" cy="19" r="2.800" fill="#678"/></svg></span><span class="tool off"><svg viewBox="0 0 24 24"><use href="#i-tagg"/><text class="ico-abc" x="12.800" y="12.300">abc</text><rect x="14" y="13" width="10.500" height="11" rx="2" fill="#666"/><path d="M15 17h4v-2.500l4.500 4-4.500 4V20h-4z" fill="#fff"/></svg></span><span class="tool off"><svg viewBox="0 0 24 24"><use href="#i-tagg"/><text class="ico-abc" x="12.800" y="12.300">abc</text><rect x="14" y="13" width="10" height="11" rx="2" fill="#666"/><path d="M17 18c0-4 5-4 5-.5 0 1.500-1 2-1.500 5" fill="none" stroke="#fff" stroke-width="1.500"/></svg></span><span class="tool off"><svg viewBox="0 0 24 24"><use href="#i-tagg"/><text class="ico-abc" x="12.800" y="12.300">abc</text><rect x="14" y="13" width="10" height="11" rx="2" fill="#77704a"/><path d="M15.500 22.500l1.500-4 5.500-4-3.500 6z" fill="#fff"/></svg></span>
    </div>
    <div class="toolbar web">
      <span class="grip"></span>
      <span class="tool"><svg><use href="#i-globe"/></svg></span><span class="more">»</span>
    </div>
    <div class="toolbar single"><span class="grip"></span><span class="tool"><svg><use href="#i-python"/></svg></span></div>
    <div class="toolbar single"><span class="grip"></span><span class="tool"><svg viewBox="0 0 24 24"><use href="#i-book"/><text class="ico-q" x="14" y="16.500">?</text></svg></span></div>
    <div class="toolbar last"><span class="grip"></span><span class="tool"><svg><use href="#i-calc"/></svg></span></div>
  </div>

  <main class="body">
    <aside class="left">
      <section class="dock browser">
        <div class="dock-title"><span>Browser</span><svg><use href="#i-float"/></svg><svg><use href="#i-close"/></svg></div>
        <div class="dock-tools">
          <span><svg><use href="#i-addsel"/></svg></span><span><svg><use href="#i-refresh"/></svg></span><span><svg><use href="#i-filter"/></svg></span><span><svg><use href="#i-collapse"/></svg></span><span><svg class="small" viewBox="0 0 24 24"><circle cx="12" cy="12" r="11" fill="#5f8cc0" stroke="#3f6ba0" stroke-width="1"/><text class="ico-i big" x="12" y="18.500">i</text></svg></span>
        </div>
        <div class="tree-box">
          <ul class="tree">
            <li><b class="open"></b><svg><use href="#i-star"/></svg>Favorites</li>
            <li class="l1"><b class="shut"></b><svg><use href="#i-folder"/></svg>/Users/maples/Scratch</li>
            <li><b class="open"></b><svg><use href="#i-bm"/></svg>Spatial Bookmarks</li>
            <li class="l1"><b></b><svg><use href="#i-folder"/></svg>Project Bookmarks</li>
            <li class="l1"><b></b><svg><use href="#i-folder"/></svg>User Bookmarks</li>
            <li><b class="open"></b><svg><use href="#i-prjhome"/></svg>Project Home</li>
            <li class="l1"><b class="open"></b><svg><use href="#i-folder-open"/></svg>L9</li>
            <li class="l2"><b></b><svg><use href="#i-vec"/></svg>Lakes.shp</li>
            <li class="l2"><b></b><svg><use href="#i-vec"/></svg>Public.shp</li>
            <li class="l2 selected"><b></b><svg><use href="#i-vec"/></svg>roads.shp</li>
            <li class="l2"><b></b><svg><use href="#i-vec"/></svg>roads_buffer300m.shp</li>
            <li class="l1"><b class="shut"></b><svg><use href="#i-qgis"/></svg>buffers</li>
            <li class="l1"><b class="shut"></b><svg><use href="#i-zip"/></svg>L9.zip</li>
            <li><b class="shut"></b><svg><use href="#i-home"/></svg>Home</li>
            <li><b class="shut"></b><svg><use href="#i-folder"/></svg>/ (Macintosh HD)</li>
            <li><b class="shut"></b><svg><use href="#i-folder"/></svg>/Volumes</li>
            <li><b></b><svg><use href="#i-gpkg"/></svg>GeoPackage</li>
            <li><b></b><svg><use href="#i-featherg"/></svg>SpatiaLite</li>
            <li><b></b><svg><use href="#i-pg"/></svg>PostgreSQL</li>
            <li><b></b><svg><use href="#i-hana"/></svg>SAP HANA</li>
            <li><b></b><svg><use href="#i-mssql"/></svg>MS SQL Server</li>
            <li><b></b><svg><use href="#i-oracle"/></svg>Oracle</li>
            <li><b></b><svg><use href="#i-wms"/></svg>WMS/WMTS</li>
            <li><b></b><svg viewBox="0 0 24 24"><path d="M2 1h20v20H2z" fill="#36506e"/></svg></li>
          </ul>
          <div class="vscroll"><i class="up"></i><span class="track"></span><span class="thumb"></span><i class="down"></i></div>
        </div>
      </section>
      <div class="hsplit"></div>
      <section class="dock layers">
        <div class="dock-title"><span>Layers</span><svg><use href="#i-float"/></svg><svg><use href="#i-close"/></svg></div>
        <div class="dock-tools">
          <span class="pressed"><svg><use href="#i-brush"/></svg></span><span><svg><use href="#i-group"/></svg></span><span class="menu"><svg><use href="#i-eye"/></svg></span><span class="menu"><svg><use href="#i-filter"/></svg></span><span><svg><use href="#i-epsf"/></svg></span><em class="drop"></em><span><svg><use href="#i-expand"/></svg></span><span><svg><use href="#i-collapse"/></svg></span><span><svg><use href="#i-rmsel"/></svg></span>
        </div>
        <ul class="layer-list">
          <li class="selected"><span class="check"><svg><use href="#i-check"/></svg></span><i class="sym line"></i><u>roads</u></li>
          <li><span class="check"><svg><use href="#i-check"/></svg></span><i class="sym fill"></i>roads_buffer300m</li>
        </ul>
      </section>
    </aside>

    <div class="vsplit"></div>
    <section class="canvas">
      <svg class="map" viewBox="855 289 1906 1882">
        <defs>
          <g id="roads">
            <path transform="translate(1100 660) scale(.47194 .73980)" d="M165 75V217M137 217V1351H226L229 1342M165 1351L267 1440L270 1467M137 217L470 215H1497M525 76L512 105L470 235L137 1255M470 235H546V217M513 217V235M1056 217V430M1166 77V217M1497 77V495L1490 497L1500 500L1568 501M1497 430H1036L1025 433L930 535L870 563L790 638L780 642H700L655 663L610 674L530 679L490 690L428 708L405 714H210M340 655H377V725L345 730L340 715M325 692L428 692L485 682L490 690M428 692V708M214 714V787M244 745V787M274 714V768M214 748H274M214 767H295M137 773L163 785H290M293 692L290 714M453 706L497 741L498 783L670 786L676 780M608 786V920L603 960V1450L589 1467M265 867L328 869L332 888L336 926M260 888H332M306 888V926M137 926H345L385 945L605 1029L638 1038L700 1032L800 998H1225L1258 994L1275 975V930M1275 430V715L1277 740L1283 750L1275 767V940L1285 932L1310 926L1340 925L1568 928M1273 975L1276 990L1270 1161M1275 714H1628M1358 714V770L1350 800L1361 822L1350 855L1332 877V905L1342 925M1275 876L1332 877M605 1139H905L985 1160L1100 1163L1270 1161L1330 1150L1435 1138L1490 1140H1711M150 1210H370L425 1208L478 1195L550 1197L605 1188M605 1352H1050L1110 1351L1220 1354L1305 1357L1345 1373L1362 1403L1390 1405L1420 1395L1480 1386L1568 1374M1159 1163L1157 1222L1160 1252L1205 1264L1215 1272V1352M1370 1212H1345L1338 1220L1310 1240L1275 1277L1268 1295L1272 1315L1290 1330L1328 1342L1305 1357M1490 1140V1210L1482 1225L1496 1270L1490 1280V1385M1478 1387L1480 1410L1486 1425M1400 1405L1382 1420L1377 1468"/>
            <path transform="translate(1800 660) scale(.47194 .73980)" d="M13 497L20 500L140 501L152 508L145 714L141 832L122 850L124 928M148 573L660 577L690 573L760 576L798 585L880 577L898 579M455 78V577M897 514L896 975L892 1214M896 860L1025 866L1063 888L1098 1072L1130 1122L1136 1147L1220 1252L1245 1272L1280 1285H1350M1376 1168L1357 1190L1350 1215V1450L1363 1466M0 927L140 929L165 930L190 928H680L690 930L710 950L720 953L785 956L896 976M165 930L185 940L228 1055V1140L229 1213M118 1372V1213H528L550 1225L562 1238L559 1400L565 1418L580 1426M0 1386L20 1383L95 1372L120 1373L165 1387L205 1416L240 1427L1030 1424L1190 1411L1245 1398L1260 1396L1350 1406M205 1416L200 1442L178 1466M246 1427L247 1397L256 1385L260 1371H272M727 1424V1468M784 1424L782 1332L790 1300L805 1285L850 1262L880 1235L892 1214M772 1137L795 1148L805 1155L845 1163L852 1195L865 1212L892 1214L1007 1215L1003 1268L976 1269M913 116H1000L1002 83M935 116L936 83M1222 87L1248 148L1264 300L1295 366L1345 410L1364 430L1376 452M1342 412L1350 462L1368 490"/>
          </g>
        </defs>
        <use href="#roads" class="buffer-edge"/>
        <use href="#roads" class="buffer-fill"/>
        <use href="#roads" class="road"/>
      </svg>
    </section>

    <aside class="right">
      <div class="dock-title"><span>Layer Styling</span><svg><use href="#i-float"/></svg><svg><use href="#i-close"/></svg></div>
      <div class="combo layer-combo"><svg><use href="#i-line"/></svg>roads<i class="tri"></i></div>
      <div class="styling">
        <nav class="vtabs">
          <span class="vtab on"><svg><use href="#i-brush"/></svg></span>
          <span class="vtab label"><svg viewBox="0 0 24 24"><use href="#i-tag"/><text class="ico-abc" x="12.800" y="12.300">abc</text></svg></span>
          <span class="vtab mask">abc</span>
          <span class="vtab"><svg viewBox="0 0 24 24"><path d="M12 .8l8.500 6L12 12.500 3.500 6.800z" fill="#f58a8a" stroke="#a40000" stroke-width="1"/><path d="M1.800 8.500l9.300 5v9.800l-9.300-6z" fill="#7fe03a" stroke="#3f8a0f"/><path d="M22.200 8.500l-9.300 5v9.800l9.300-6z" fill="#fde84f" stroke="#c4a000"/></svg></span>
          <span class="vtab"><svg viewBox="0 0 24 24"><path d="M5 5v10M18.500 5v10M11.800 8v12" stroke="#c98a32" stroke-width="2"/><path d="M7 .8h10v6H7z" fill="#ee5a5a"/><path d="M7 6.800h10l-1.500 2h-7zM1 16l1.500-1.700h6L10 16zM13.500 16l1.500-1.700h6.500L23 16z" fill="#b9741f"/><path d="M.8 16.500h9.500V23H.8z" fill="#fde560"/><path d="M13.500 16.500H23V23h-9.500z" fill="#7fb0e8"/></svg></span>
          <span class="vtab"><svg viewBox="0 0 24 24"><use href="#i-redo" width="14" height="14" x="1" y="1"/><use href="#i-undo" width="14" height="14" x="9" y="9"/></svg></span>
        </nav>
        <div class="props">
          <div class="combo renderer"><svg class="single"><use href="#i-single"/></svg>Single Symbol<i class="tri"></i></div>
          <div class="symbol-area">
            <div class="preview"></div>
            <ul class="sym-tree">
              <li><b class="open"></b><i></i><strong>Line</strong></li>
              <li class="selected"><i></i>Simple Line</li>
            </ul>
            <div class="sym-buttons">
              <span class="btn"><svg viewBox="0 0 28 28"><path d="M9 1h10v8h8v10h-8v8H9v-8H1V9h8z" fill="#fff" stroke="#5a8c5a" stroke-width="1.800"/><path d="M14 4.500v19M4.500 14h19" stroke="#5a8c5a" stroke-width="4"/></svg></span>
              <span class="btn dim"><svg viewBox="0 0 28 28"><path d="M14 3l12 21H2z" fill="#c5cbd2" stroke="#8a939d" stroke-width="1.500"/></svg></span>
              <span class="btn dim"><svg viewBox="0 0 28 28"><path d="M1 9h26v10H1z" fill="#fff" stroke="#c99" stroke-width="1.500"/><path d="M5 14h18" stroke="#c99" stroke-width="4"/></svg></span>
              <span class="btn dim"><svg viewBox="0 0 28 28"><path d="M14 25L26 4H2z" fill="#c5cbd2" stroke="#8a939d" stroke-width="1.500"/></svg></span>
              <span class="btn"><svg viewBox="0 0 28 28"><path d="M1 5h18v22H1z" fill="#999b95" stroke="#555" stroke-width="1.200"/><path d="M5 1h22v22H5z" fill="#ececec" stroke="#777" stroke-width="1.500"/><rect x="16" y="16" width="12" height="12" rx="2" fill="#c4a000"/><path d="M22 18v8M18.500 20l7 4M25.500 20l-7 4" stroke="#fff" stroke-width="1.500"/></svg></span>
              <span class="btn"><svg viewBox="0 0 28 28"><path d="M8 6c2-6 13-5 13 1.500V14" fill="none" stroke="#888" stroke-width="3.500"/><path d="M8 6c2-6 13-5 13 1.500V14" fill="none" stroke="#eee" stroke-width="1"/><rect x="3" y="13" width="22" height="14" rx="1.500" fill="#f1df2a" stroke="#c4a000" stroke-width="2"/></svg></span>
            </div>
          </div>
          <hr>
          <div class="row type"><label>Symbol layer type</label><div class="combo cut">Simple Line</div></div>
          <div class="row color"><label>Color</label><div class="color-btn"><span></span></div><div class="color-drop"><i class="tri"></i></div><svg class="dd"><use href="#i-override"/></svg></div>
          <div class="row"><label>Stroke width</label><div class="spin"><span class="clip">1.260000</span><svg class="clear" viewBox="0 0 24 20"><path d="M0 10L7 0h17v20H7z" fill="#999"/><path d="M9.500 4.500l9 11M18.500 4.500l-9 11" stroke="#fff" stroke-width="1.800"/></svg><em><i class="up"></i><i class="down"></i></em></div><div class="combo unit">Millimeters<i class="tri"></i></div><svg class="dd"><use href="#i-override"/></svg></div>
          <div class="row"><label>Offset</label><div class="spin"><span>0.000000</span><em><i class="up"></i><i class="down"></i></em></div><div class="combo unit">Millimeters<i class="tri"></i></div><svg class="dd"><use href="#i-override"/></svg></div>
          <div class="row"><label>Stroke style</label><div class="combo wide"><i class="solid"></i>Solid Line<i class="tri"></i></div><svg class="dd"><use href="#i-override"/></svg></div>
          <div class="row"><label>Join style</label><div class="combo wide"><svg class="join" viewBox="0 0 32 30"><path d="M1 1h18l10 10v19H11V20H1z" fill="#5f86b8"/><path d="M1 1.500h18L28.500 11v19M1 20h9.500v10" fill="none" stroke="#111" stroke-width="2"/><path d="M1 10h20v20" fill="none" stroke="#f1df2a" stroke-width="4" stroke-dasharray="4 4"/></svg>Bevel<i class="tri"></i></div><svg class="dd"><use href="#i-override"/></svg></div>
          <div class="row"><label>Cap style</label><div class="combo wide"><svg class="join" viewBox="0 0 32 30"><path d="M1 5.500h29v19H1" fill="#5f86b8" stroke="#111" stroke-width="2"/><path d="M1 15h20" stroke="#f1df2a" stroke-width="4" stroke-dasharray="4 4"/></svg>Square<i class="tri"></i></div><svg class="dd"><use href="#i-override"/></svg></div>
          <div class="tick t1"><span class="check"></span>Use custom dash pattern</div>
          <div class="row dash"><div class="dash-btn"><i></i></div><div class="combo unit">Millimeters<i class="tri"></i></div><svg class="dd"><use href="#i-override"/></svg></div>
          <div class="row"><label>Pattern offset</label><div class="spin"><span>0.000000</span><em><i class="up"></i><i class="down"></i></em></div><div class="combo unit">Millimeters<i class="tri"></i></div><svg class="dd"><use href="#i-override"/></svg></div>
          <div class="tick t2"><span class="check"></span>Align dash pattern to line length</div>
          <div class="tick t3"><span class="check"></span>Tweak dash pattern at sharp corners</div>
          <div class="group-title"><svg viewBox="0 0 22 16"><path d="M1 1h20L11 15z" fill="#555" stroke="#111" stroke-width="1.500"/></svg>Trim Lines</div>
          <div class="group">
            <div class="row"><label>Start</label><div class="spin"><span>0.000000</span><em><i class="up"></i><i class="down faint"></i></em></div><div class="combo unit">Millimeters<i class="tri"></i></div><svg class="dd"><use href="#i-override"/></svg><i class="mini"></i></div>
            <div class="row"><label>End</label><div class="spin"><span>0.000000</span><em><i class="up"></i><i class="down faint"></i></em></div><div class="combo unit">Millimeters<i class="tri"></i></div><svg class="dd"><use href="#i-override"/></svg><i class="mini"></i></div>
          </div>
          <div class="enable"><span class="check"><svg><use href="#i-check"/></svg></span><span class="lbl">Enable symbol layer</span><svg class="dd"><use href="#i-override"/></svg><i class="mini"></i><span class="check fx"></span><span class="lbl">Draw effects</span><span class="btn dim star"><svg viewBox="0 0 28 28"><path d="M14 1l3.500 9H27l-7.500 6 3 10-8.500-6-8.500 6 3-10L1 10h9.500z" fill="#a5a07a"/><path d="M20 16l4 2-5 10-2-4z" fill="#888"/></svg></span></div>
          <div class="hscroll"><span><i class="larr"></i></span><span class="trk"></span><span class="thm"></span><span class="end"><i class="rarr"></i></span></div>
          <div class="group-title rendering"><svg viewBox="0 0 16 22"><path d="M1 1v20l13.500-10z" fill="#555" stroke="#111" stroke-width="1.500"/></svg>Layer Rendering</div>
          <div class="actions"><span class="btn"><svg><use href="#i-undo"/></svg></span><span class="btn"><svg><use href="#i-redo"/></svg></span><span class="check live"><svg><use href="#i-check"/></svg></span><span class="lbl">Live update</span><span class="btn apply">Apply</span></div>
        </div>
      </div>
      <div class="tabs"><span class="tab on">Layer Styling</span><span class="tab">Processing Toolbox</span></div>
    </aside>
  </main>

  <footer class="status">
    <div class="search"><svg viewBox="0 0 24 24"><circle cx="10" cy="10" r="7" fill="none" stroke="#555" stroke-width="1.600"/><path d="M15 15l7 7" stroke="#555" stroke-width="1.800"/></svg>Type to locate (⌘K)</div>
    <span class="s-coord">Coordinate</span><div class="field coord">509500,5005007</div>
    <svg class="mouse" viewBox="0 0 30 32"><g transform="rotate(-22 15 16)"><rect x="6" y="1" width="13" height="18" rx="6" fill="#fff" stroke="#111" stroke-width="2.500"/><path d="M10 3v12M14.500 3v12" stroke="#111" stroke-width="2.500"/><rect x="8" y="12" width="13" height="19" rx="6" fill="#fff" stroke="#111" stroke-width="2.500"/><circle cx="14" cy="23" r="3" fill="none" stroke="#111" stroke-width="2"/></g><path d="M20 6h2M25 5h2M26 1h2M22 10h2M1 20h2M4 24h2" stroke="#111" stroke-width="2"/></svg>
    <span class="s-scale">Scale</span><div class="field scale">1:86872<em><i class="tri"></i></em></div>
    <svg class="lock" viewBox="0 0 24 30"><path d="M5 15V8c0-8 14-8 14 0v7" fill="none" stroke="#888" stroke-width="3"/><rect x="0" y="14" width="24" height="16" rx="2" fill="#606060"/></svg>
    <span class="s-mag">Magnifier</span><div class="spin mag"><span>100%</span><em><i class="up"></i><i class="down"></i></em></div>
    <span class="s-rot">Rotation</span><div class="spin rot"><span>0.0 °</span><em><i class="up"></i><i class="down"></i></em></div>
    <span class="check"><svg><use href="#i-check"/></svg></span><span class="s-render">Render</span>
    <svg class="crs" viewBox="0 0 30 28"><path d="M9 1h12l8 9.500v3H1v-3z" fill="#777"/><path d="M5 13c0 9 5 14 10 14s10-5 10-14M15 1v26M10 2c-4 8-2 20 3 25M20 2c4 8 2 20-3 25M6 19h18M3 8h24" fill="none" stroke="#777" stroke-width="1.500"/><path d="M12 1l-2 12M18 1l2 12M6 6h18" stroke="#eee" stroke-width="1"/></svg>
    <span class="s-epsg">EPSG:26915</span>
    <svg class="bubble" viewBox="0 0 32 30"><ellipse cx="16" cy="13.500" rx="16" ry="13" fill="#5c5c5c"/><path d="M18 24l12 6-4-10z" fill="#5c5c5c"/></svg>
  </footer>
</div>
</body>
</html>
```
FILE: styles.css
```css
* { box-sizing: border-box; }
html, body { margin: 0; }
body {
  width: 3680px; height: 2382px; padding: 74px 110px; overflow: hidden;
  background: #fff; color: #262626;
  font: 26px/1 Inter, "Liberation Sans", sans-serif; letter-spacing: -.2px;
}
ul { list-style: none; margin: 0; padding: 0; }
i, em { font-style: normal; }
svg { display: block; flex: none; }
.sprite { position: absolute; }

.window {
  width: 3460px; height: 2163px; display: flex; flex-direction: column;
  background: #f6f6f6; border: 2px solid #444; border-radius: 24px; overflow: hidden;
  box-shadow: 0 40px 100px rgba(0,0,0,.42);
}

/* title bar */
.titlebar { height: 58px; flex: none; display: grid; grid-template-columns: 1fr auto 1fr; align-items: center; background: #fdfdfd; border-bottom: 2px solid #000; }
.titlebar h1 { margin: 0; font-size: 26px; font-weight: 700; color: #3c3c3c; letter-spacing: .35px; }
.lights { display: flex; gap: 16px; padding-left: 16px; }
.lights i { width: 24px; height: 24px; border-radius: 50%; }
.red { background: #dc2f22; } .amber { background: #986a22; border: 1px solid #7a5010; } .green { background: #398424; border: 1px solid #256a14; }

/* tool bars */
.toolrow { height: 75px; flex: none; display: flex; gap: 1px; background: #fafafa; }
.toolrow.second { height: 78px; }
.toolbar { display: flex; align-items: center; padding-right: 5px; border-bottom: 2px solid #bbb; background: linear-gradient(#fff, #f5f5f5); }
.second .toolbar { padding-top: 2px; }
.toolbar.last { flex: 1; }
.toolbar.labels { padding-right: 7px; }
.toolbar.labels .grip { margin-right: 3px; }
.toolbar.labels .diagram { margin-right: 3px; }
.toolbar.web { width: 179px; }
.toolbar.web .grip { margin-right: 8px; }
.toolbar.single { width: 97px; padding-right: 0; }
.grip { flex: none; width: 10px; height: 33px; margin: 0 6px 0 9px; background: radial-gradient(circle 1px at 1px 1px, #aaa 95%, transparent) 0 0 / 8px 6px; }
.tool { position: relative; flex: none; width: 66.15px; height: 62px; display: flex; align-items: center; justify-content: center; }
.tool svg { width: 48px; height: 48px; overflow: visible; }
.tool.active { width: 62px; margin: 0 2px; background: #e1e1e1; border: 2px solid #aeaeae; border-radius: 6px; }
.off svg { filter: grayscale(.75); opacity: .33; }
.tool.corner::after { content: ""; position: absolute; right: 7px; bottom: 4px; border: 6px solid transparent; border-top: 7px solid #555; border-bottom: 0; }
.drop { flex: none; width: 24px; height: 8px; }
.drop::before { content: ""; display: block; width: 0; margin: 0 2px; border: 7.500px solid transparent; border-top: 8px solid #555; border-bottom: 0; }
.sep { width: 12px; height: 38px; flex: none; }
.sep::before { content: ""; display: block; width: 2px; height: 38px; margin-left: 7px; background: #d5d5d5; }
.more { margin-left: 62px; font-size: 30px; color: #333; }
svg text { letter-spacing: 0; text-anchor: middle; }
.ico-a { font: 12px "Open Sans", sans-serif; fill: #333; text-anchor: start; }
.ico-11 { font: bold 8.500px "Open Sans", sans-serif; fill: #444; }
.ico-i { font: italic bold 14px "Liberation Serif", serif; fill: #fff; }
.ico-i.big { font-size: 19px; }
.ico-q { font: 14px "Liberation Serif", serif; fill: #fff; }
.ico-abc { font: 600 8px "Open Sans", sans-serif; fill: #333; }
.ico-abc.hot { fill: #e11; }

/* docks */
.body { flex: 1; display: flex; min-height: 0; }
.left { width: 727px; flex: none; display: flex; flex-direction: column; }
.dock-title { display: flex; align-items: center; height: 40px; padding: 0 3px 0 8px; font-size: 22px; letter-spacing: 0; }
.dock-title span { flex: 1; }
.dock-title svg { width: 22px; height: 22px; margin-left: 6px; }
.dock-tools { display: flex; align-items: center; height: 61px; padding-left: 8px; }
.dock-tools span { position: relative; width: 48px; height: 46px; margin-right: 2px; display: flex; align-items: center; justify-content: center; }
.dock-tools svg { width: 32px; height: 32px; overflow: visible; }
.dock-tools svg.small { width: 28px; height: 28px; }
.dock-tools .pressed { background: #e3e3e3; border: 2px solid #aeaeae; border-radius: 6px; }
.dock-tools .menu::after { content: ""; position: absolute; right: 3px; bottom: 4px; border: 6px solid transparent; border-top: 7px solid #555; border-bottom: 0; }
.tree-box { height: 836px; display: flex; border: 2px solid #bbb; border-left: 0; background: #fff; overflow: hidden; }
.tree { flex: 1; }
.tree li { height: 36px; width: 431px; display: flex; align-items: center; white-space: nowrap; padding: 1px 0 0 8px; color: #222; }
.tree li svg { width: 32px; height: 32px; margin-right: 13px; }
.tree li b { width: 20px; margin-right: 12px; display: flex; justify-content: center; flex: none; }
.tree .l1 { padding-left: 40px; } .tree .l2 { padding-left: 72px; }
.tree .selected { background: #dcdcdc; color: #000; }
b.open::before, b.shut::before { content: ""; border: 8px solid transparent; border-top: 8.500px solid #5a5a5a; border-bottom: 0; }
b.shut::before { border: 8px solid transparent; border-left: 8.500px solid #5a5a5a; border-right: 0; }
.vscroll { width: 28px; flex: none; display: flex; flex-direction: column; border-left: 2px solid #bbb; }
.vscroll > i { height: 27px; display: flex; align-items: center; justify-content: center; }
.up::before, .down::before { content: ""; display: block; border: 7.500px solid transparent; border-bottom: 9px solid #5a5a5a; border-top: 0; }
.down::before { border: 7.500px solid transparent; border-top: 9px solid #5a5a5a; border-bottom: 0; }
.track { flex: 1; border-top: 2px solid #bbb; background: linear-gradient(90deg, #f8f8f8, #fff); }
.thumb { height: 162px; background: #ebebeb; border: solid #bbb; border-width: 2px 0; }
.hsplit { height: 14px; width: 34px; margin-left: 348px; background: radial-gradient(circle 1px at 1px 1px, #aaa 95%, transparent) 0 6px / 6px 14px repeat-x; }
.layers { flex: 1; display: flex; flex-direction: column; }
.layers .dock-title { height: 38px; }
.layers .dock-tools { height: 62px; padding-bottom: 2px; }
.layer-list { flex: 1; border: 2px solid #bbb; border-left: 0; background: #fff; font-weight: 700; letter-spacing: .15px; }
.layer-list li { height: 36px; display: flex; align-items: center; padding-left: 48px; }
.layer-list li.selected { background: #dcdcdc; color: #000; }
.layer-list u { text-decoration-thickness: 2.500px; text-underline-offset: 4px; }
.check { width: 28px; height: 28px; flex: none; background: #fff; border: 2px solid #bbb; border-radius: 2px; }
.check svg { width: 28px; height: 28px; margin: -2px 0 0 -1px; overflow: visible; }
.sym { width: 32px; margin: 0 13px 0 12px; flex: none; }
.sym.line { height: 4px; background: #000; }
.sym.fill { height: 32px; background: #8c5a97; border: 1px solid #60406a; }
.vsplit { width: 14px; flex: none; background: radial-gradient(circle 1px at 1px 1px, #aaa 95%, transparent) 7px 930px / 14px 7px no-repeat; }

/* map */
.canvas { flex: 1; background: #fff; border: 2px solid #bbb; border-bottom-width: 1px; overflow: hidden; }
.map { width: 1906px; height: 1882px; }
#roads path { vector-effect: non-scaling-stroke; fill: none; }
.buffer-edge { stroke: #33293a; stroke-width: 78.500px; stroke-linecap: round; stroke-linejoin: round; }
.buffer-fill { stroke: #8c5a97; stroke-width: 76px; stroke-linecap: round; stroke-linejoin: round; }
.road { stroke: #000; stroke-width: 6.800px; stroke-linecap: square; stroke-linejoin: bevel; }

/* layer styling */
.right { width: 805px; flex: none; display: flex; flex-direction: column; padding-left: 19px; }
.right .dock-title { padding: 0 4px 0 3px; height: 42px; }
.combo, .btn, .color-btn, .color-drop, .dash-btn {
  display: flex; align-items: center; height: 48px; flex: none; white-space: nowrap; color: #000;
  border: 2px solid #b0b0b0; border-radius: 5px; background: linear-gradient(#fff, #f1f1f1);
}
.combo { padding: 0 14px 0 8px; }
.combo .tri { margin-left: auto; }
.tri { flex: none; border: 7.500px solid transparent; border-top: 8.500px solid #555; border-bottom: 0; }
.layer-combo { margin: 4px 6px 0 0; padding-left: 10px; }
.layer-combo svg { width: 34px; height: 32px; margin-right: 6px; }
.styling { display: flex; margin-top: 24px; height: 1707px; }
.vtabs { width: 76px; flex: none; background: #5e5e5e; }
.vtab { display: flex; align-items: center; height: 64px; padding-left: 8px; }
.vtab.label { padding-top: 10px; }
.vtab.on { background: #f6f6f6; height: 51px; padding: 0 0 8px 12px; }
.vtab svg { width: 46px; height: 46px; overflow: visible; }
.vtab.mask { color: #26344d; font-weight: 700; font-size: 24px; -webkit-text-stroke: 7px #e9eefb; paint-order: stroke fill; }
.props { width: 698px; margin-left: 6px; overflow: hidden; }
.renderer { padding-left: 14px; }
.renderer .single { width: 26px; height: 30px; margin-right: 9px; }
.symbol-area { display: flex; height: 272px; padding-top: 11px; }
.preview { width: 200px; height: 10px; margin-top: 127px; background: #000; border: solid #aaa; border-width: 2px 0; }
.sym-tree { width: 349px; height: 223px; margin: 18px 13px 0 12px; border: 2px solid #bbb; background: #fff; }
.sym-tree li { display: flex; align-items: center; height: 36px; padding: 1px 0 0 86px; }
.sym-tree li:first-child { padding-left: 12px; }
.sym-tree li b { width: 20px; margin-right: 14px; }
.sym-tree li b::before { display: block; width: 0; }
.sym-tree li i { width: 32px; height: 8px; background: #000; margin-right: 13px; flex: none; }
.sym-tree .selected { background: #dcdcdc; color: #000; }
.sym-buttons { display: grid; grid-template-columns: 56px 56px; grid-auto-rows: 48px; gap: 8px 12px; align-content: start; }
.btn { justify-content: center; }
.btn svg { width: 28px; height: 28px; }
.btn.dim { border-color: #ccc; }
.btn.dim svg { opacity: .4; }
.props hr { margin: 11px 0 18px; border: 0; border-top: 2px solid #c0c0c0; border-bottom: 1px solid #fff; height: 3px; width: 696px; }
.row { display: flex; align-items: center; height: 48px; margin-bottom: 16px; padding-left: 20px; white-space: nowrap; }
.row label { width: 192px; flex: none; padding-top: 1px; }
.row .dd { margin-left: 20px; }
.dd { width: 36px; height: 32px; }
.row.type { padding-left: 2px; margin-bottom: 24px; margin-top: -1px; }
.row.type label { width: 221px; letter-spacing: 0; }
.combo.cut { width: 500px; }
.row.color { height: 56px; margin-bottom: 14px; }
.color-btn { width: 420px; height: 56px; padding: 0 8px; background: #fcfcfc; }
.color-btn span { flex: 1; height: 32px; border-radius: 5px; background: #000; }
.color-drop { width: 22px; height: 56px; margin-left: 1px; justify-content: center; background: #fcfcfc; }
.color-drop .tri { border-width: 8.500px 7px 0; }
.spin { position: relative; flex: none; display: flex; align-items: center; width: 186px; height: 46px; margin-right: 12px; padding-left: 8px; background: #fff; border: 2px solid #b0b0b0; border-radius: 5px; box-shadow: inset 0 2px 0 #eee; align-self: flex-start; letter-spacing: 0; }
.spin em { display: flex; flex-direction: column; align-items: center; justify-content: center; gap: 9px; width: 29px; height: 42px; margin-left: auto; border-left: 2px solid #bbb; background: #fafafa; border-radius: 0 4px 4px 0; }
.spin .clip { width: 90px; overflow: hidden; }
.spin .clear { width: 26px; height: 20px; margin-left: 7px; }
.faint { opacity: .5; }
.unit { width: 245px; }
.wide { width: 443px; }
.solid { width: 64px; height: 4px; background: #000; margin: 0 7px 0 2px; }
.join { width: 32px; height: 30px; margin-right: 7px; }
.tick { display: flex; align-items: center; gap: 12px; height: 28px; padding-left: 20px; white-space: nowrap; letter-spacing: -.3px; }
.t1 { margin: 22px 0; }
.t2 { margin: 22px 0 28px; }
.t3 { color: #444; }
.t3 .check { background: #f6f6f6; }
.row.dash { padding-left: 56px; }
.dash-btn { width: 342px; margin-right: 12px; padding: 0 8px; border-color: #ccc; }
.dash-btn i { flex: 1; height: 8px; background: repeating-linear-gradient(90deg, #bdbdbd 0 36px, #f0f0f0 36px 40px); }
.group-title { display: flex; align-items: center; height: 32px; margin-top: 23px; padding-left: 25px; font-weight: 700; letter-spacing: 0; }
.group-title svg { width: 22px; height: 16px; margin-right: 17px; }
.group { width: 720px; height: 162px; margin: 5px 0 0 22px; padding-top: 22px; background: #f2f2f2; border: 2px solid #dcdcdc; }
.group .row label { width: 74px; }
.group .spin { width: 255px; }
.mini { flex: none; align-self: flex-end; margin: 0 0 7px 7px; border: 5px solid transparent; border-top: 6px solid #555; border-bottom: 0; }
.enable { display: flex; align-items: center; height: 46px; margin-top: 180px; padding-left: 2px; white-space: nowrap; }
.enable .lbl { flex: none; margin-left: 10px; width: 275px; }
.enable .fx { margin-left: 72px; }
.enable .fx + .lbl { width: 180px; }
.enable .star { width: 60px; justify-content: flex-start; padding-left: 7px; height: 46px; }
.hscroll { display: flex; height: 28px; margin-top: 23px; width: 697px; border-top: 2px solid #bbb; background: #fdfdfd; }
.hscroll span { display: flex; align-items: center; justify-content: center; width: 26px; border-right: 2px solid #bbb; }
.hscroll .trk { flex: 1; }
.hscroll .thm { width: 58px; background: #ebebeb; }
.hscroll .end { border: 0; width: 27px; }
.larr { border: 7.500px solid transparent; border-right: 9px solid #444; border-left: 0; }
.rarr { border: 7.500px solid transparent; border-left: 9px solid #444; border-right: 0; }
.rendering { margin-top: 27px; padding-left: 8px; letter-spacing: .1px; }
.rendering svg { width: 16px; height: 22px; margin-right: 20px; }
.actions { display: flex; align-items: center; height: 48px; margin-top: 13px; }
.actions .btn { width: 48px; height: 46px; margin-right: 12px; }
.actions .live { margin-left: 214px; }
.actions .lbl { margin-left: 10px; }
.actions .apply { width: 160px; height: 48px; margin: 0 0 0 auto; }
.tabs { display: flex; align-items: flex-start; margin: 8px 0 0 -6px; height: 54px; }
.tabs::after { content: ""; flex: 1; border-top: 2px solid #bbb; }
.tab { display: flex; align-items: center; justify-content: center; width: 287px; height: 49px; background: #e4e4e4; border: 2px solid #bbb; border-left: 0; border-radius: 0 0 5px 5px; letter-spacing: -.3px; }
.tab.on { width: 208px; height: 53px; background: #fbfbfb; border: 2px solid #b5b5b5; border-top: 0; padding-top: 3px; letter-spacing: 0; }

/* status bar */
.status { height: 62px; flex: none; display: flex; align-items: center; padding: 2px 14px 0 8px; font-size: 22px; white-space: nowrap; letter-spacing: 0; }
.search { display: flex; align-items: center; width: 428px; height: 48px; padding-left: 16px; background: #fff; border: 2px solid #b0b0b0; border-radius: 5px; font-size: 24px; color: #777; }
.search svg { width: 24px; height: 24px; margin-right: 17px; }
.s-coord { width: 121px; margin-left: 1275px; }
.field { display: flex; align-items: center; height: 44px; background: #fff; border: 2px solid #b0b0b0; border-radius: 5px; box-shadow: inset 0 2px 0 #eee; }
.coord { width: 224px; justify-content: center; }
.mouse { width: 30px; height: 32px; margin-left: 9px; }
.s-scale { width: 64px; margin-left: 28px; color: #000; }
.scale { width: 186px; height: 48px; padding-left: 6px; }
.scale em { display: flex; align-items: center; justify-content: center; width: 40px; height: 44px; margin-left: auto; border-left: 2px solid #ccc; background: #fafafa; }
.lock { width: 24px; height: 30px; margin-left: 24px; }
.s-mag { width: 107px; margin-left: 18px; color: #000; }
.status .spin { align-self: center; margin: 0; }
.s-rot { width: 106px; margin-left: 18px; }
.status .check { margin-left: 12px; }
.s-render { width: 96px; margin-left: 10px; }
.crs { width: 30px; height: 28px; margin-left: 11px; }
.s-epsg { color: #000; margin-left: 5px; width: 178px; }
.bubble { width: 32px; height: 30px; }
```
